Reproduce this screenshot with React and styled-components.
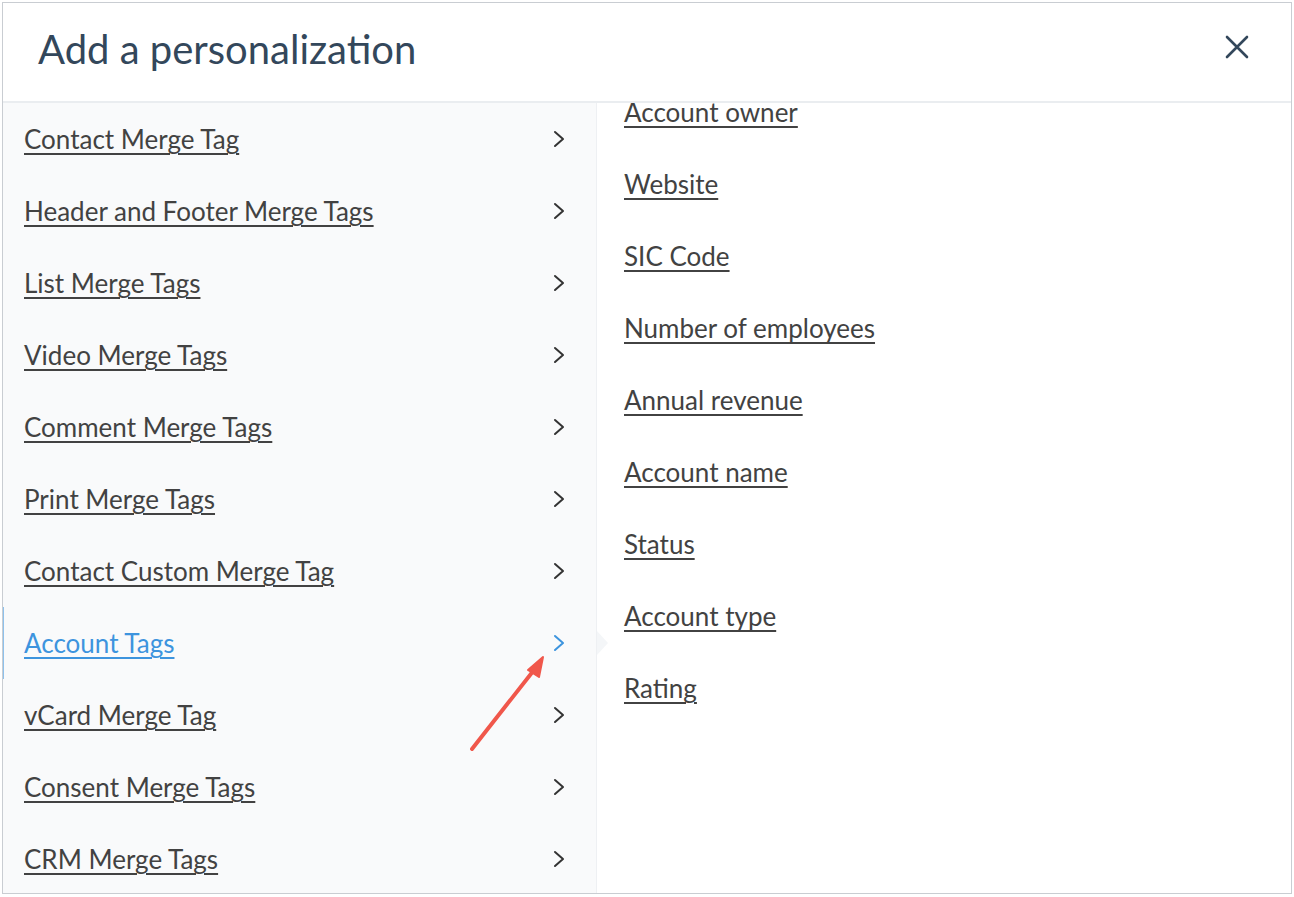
import React from 'react';
import styled, { createGlobalStyle } from 'styled-components';

const GlobalStyle = createGlobalStyle`
  html, body {
    margin: 0;
    padding: 0;
    background: #ffffff;
    font-family: Lato, "Open Sans", sans-serif;
  }
`;

const Page = styled.div`
  position: relative;
  width: 1294px;
  height: 897px;
  overflow: hidden;
`;

const Modal = styled.div`
  margin: 2px 0 0 2px;
  width: 1288px;
  height: 890px;
  border: 1px solid #c9cdd2;
  background: #fff;
  display: flex;
  flex-direction: column;
  overflow: hidden;
`;

const Header = styled.div`
  height: 98px;
  flex: none;
  display: flex;
  align-items: center;
  justify-content: space-between;
  padding: 0 41px 0 35px;
  border-bottom: 2px solid #eaedf0;
`;

const Title = styled.h2`
  margin: 0 0 6px;
  font-size: 40px;
  font-weight: 400;
  color: #33475b;
`;

const CloseButton = styled.button`
  background: none;
  border: none;
  padding: 0;
  margin-bottom: 10px;
  width: 26px;
  height: 26px;
  display: flex;
  align-items: center;
  justify-content: center;
  cursor: pointer;
`;

const Body = styled.div`
  flex: 1;
  display: flex;
  min-height: 0;
`;

const Sidebar = styled.div`
  width: 593px;
  flex: none;
  background: #f9fafb;
  border-right: 1px solid #eef0f3;
  display: flex;
  flex-direction: column;
`;

const NavRow = styled.div`
  position: relative;
  height: 72px;
  flex: none;
  display: flex;
  align-items: center;
  justify-content: space-between;
  padding: 0 30px 0 20px;
  border-left: 2px solid ${p => (p.$active ? '#8ec1ec' : 'transparent')};
  margin-left: -1px;
  color: ${p => (p.$active ? '#3d94de' : '#424242')};

  &::after {
    content: '';
    display: ${p => (p.$active ? 'block' : 'none')};
    position: absolute;
    right: -12px;
    top: 50%;
    transform: translateY(-50%);
    border-top: 12px solid transparent;
    border-bottom: 12px solid transparent;
    border-left: 11px solid #f4f6f8;
  }
`;

const TagLink = styled.a`
  font-size: 26px;
  line-height: 32px;
  color: inherit;
  text-decoration: underline;
  text-decoration-thickness: 2px;
  text-underline-offset: 4px;
  cursor: pointer;
`;

const Content = styled.div`
  flex: 1;
  overflow: hidden;
  padding-left: 27px;
`;

const TagList = styled.div`
  margin-top: -27px;
  display: flex;
  flex-direction: column;
`;

const TagRow = styled.div`
  height: 72px;
  display: flex;
  align-items: center;
  color: #424242;
`;

const Annotation = styled.svg`
  position: absolute;
  left: 0;
  top: 0;
  pointer-events: none;
`;

const Chevron = ({ color }) => (
  <svg width="14" height="18" viewBox="0 0 14 18">
    <polyline points="3,2 11,9 3,16" fill="none" stroke={color} strokeWidth="2" strokeLinecap="round" strokeLinejoin="round" />
  </svg>
);

const categories = [
  'Contact Merge Tag',
  'Header and Footer Merge Tags',
  'List Merge Tags',
  'Video Merge Tags',
  'Comment Merge Tags',
  'Print Merge Tags',
  'Contact Custom Merge Tag',
  'Account Tags',
  'vCard Merge Tag',
  'Consent Merge Tags',
  'CRM Merge Tags',
];

const accountTags = [
  'Account owner',
  'Website',
  'SIC Code',
  'Number of employees',
  'Annual revenue',
  'Account name',
  'Status',
  'Account type',
  'Rating',
];

export default function App() {
  const active = 'Account Tags';

  return (
    <Page>
      <GlobalStyle />
      <Modal>
        <Header>
          <Title>Add a personalization</Title>
          <CloseButton aria-label="Close">
            <svg width="24" height="24" viewBox="0 0 24 24">
              <path d="M2 2 L22 22 M22 2 L2 22" stroke="#33475b" strokeWidth="2.6" strokeLinecap="round" />
            </svg>
          </CloseButton>
        </Header>
        <Body>
          <Sidebar>
            {categories.map(name => (
              <NavRow key={name} $active={name === active}>
                <TagLink>{name}</TagLink>
                <Chevron color={name === active ? '#3d94de' : '#333'} />
              </NavRow>
            ))}
          </Sidebar>
          <Content>
            <TagList>
              {accountTags.map(tag => (
                <TagRow key={tag}>
                  <TagLink>{tag}</TagLink>
                </TagRow>
              ))}
            </TagList>
          </Content>
        </Body>
      </Modal>
      <Annotation width="1294" height="897" viewBox="0 0 1294 897">
        <line x1="472" y1="749" x2="534" y2="670" stroke="#f0574b" strokeWidth="4" strokeLinecap="round" />
        <polygon points="543,657 528,670 539,677" fill="#f0574b" stroke="#f0574b" strokeWidth="2" strokeLinejoin="round" />
      </Annotation>
    </Page>
  );
}
